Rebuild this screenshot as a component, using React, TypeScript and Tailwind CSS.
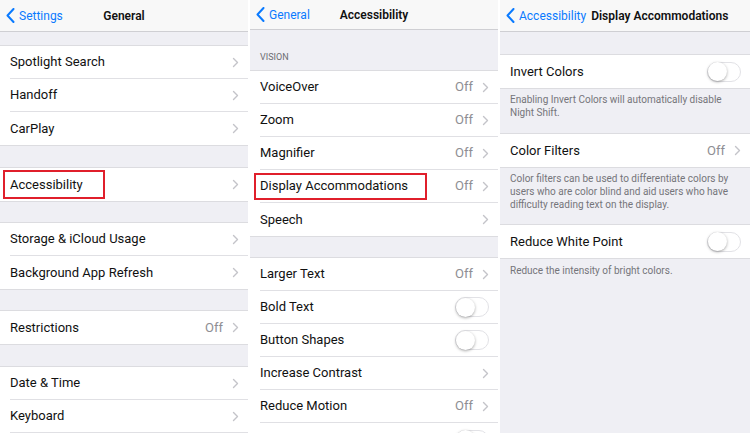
import React from "react";

type RowProps = {
  label: string;
  detail?: string;
  chevron?: boolean;
  toggle?: boolean;
  last?: boolean;
  box?: string;
};

function Chevron() {
  return (
    <svg width="7" height="11" viewBox="0 0 7 11" className="shrink-0">
      <path d="M1.5 1.5L5.5 5.5L1.5 9.5" fill="none" stroke="#c4c4c9" strokeWidth="1.4" strokeLinecap="round" strokeLinejoin="round" />
    </svg>
  );
}

function BackChevron() {
  return (
    <svg width="9" height="15" viewBox="0 0 9 15" className="shrink-0">
      <path d="M7.5 1L1.5 7.5L7.5 14" fill="none" stroke="#0a7aff" strokeWidth="2" strokeLinecap="round" strokeLinejoin="round" />
    </svg>
  );
}

function Toggle() {
  return (
    <div className="w-[34px] h-[20px] rounded-full border border-[#e2e2e6] bg-white flex items-center shrink-0">
      <div className="w-[19px] h-[19px] rounded-full bg-white shadow-[0_1px_3px_rgba(0,0,0,0.35)]" />
    </div>
  );
}

function Row({ label, detail, chevron = true, toggle, last, box }: RowProps) {
  return (
    <div className="bg-white pl-[10px]">
      <div className={`h-[33px] flex items-center pr-[9px] ${last ? "" : "border-b border-[#e0e0e4]"}`}>
        {box ? (
          <span className={`flex items-center border-2 border-[#e01f2b] ${box}`}>{label}</span>
        ) : (
          <span>{label}</span>
        )}
        <div className="ml-auto flex items-center gap-[9px]">
          {detail && <span className="text-[#8e8e93]">{detail}</span>}
          {toggle ? <Toggle /> : chevron && <Chevron />}
        </div>
      </div>
    </div>
  );
}

function Group({ children }: { children: React.ReactNode }) {
  return <div className="border-y border-[#dcdce0]">{children}</div>;
}

function Footer({ children, className }: { children: React.ReactNode; className: string }) {
  return <div className={`px-[10px] text-[10px] leading-[13px] text-[#75757a] ${className}`}>{children}</div>;
}

export default function App() {
  return (
    <div className="w-[750px] h-[433px] overflow-hidden bg-white grid grid-cols-[248px_248px_1fr] gap-x-[2px] text-[13px] text-[#111] font-['Roboto',sans-serif]">
      {/* General */}
      <div className="bg-[#efeff4] h-[433px] overflow-hidden">
        <div className="h-[32px] bg-[#f8f8f8] border-b border-[#cfcfd3] grid grid-cols-[1fr_auto_1fr] items-center text-[12px]">
          <div className="flex items-center gap-[4px] pl-[6px] text-[#0a7aff]">
            <BackChevron />
            <span>Settings</span>
          </div>
          <div className="font-semibold text-[#111]">General</div>
          <div />
        </div>
        <div className="h-[13px]" />
        <Group>
          <Row label="Spotlight Search" />
          <Row label="Handoff" />
          <Row label="CarPlay" last />
        </Group>
        <div className="h-[21px]" />
        <Group>
          <Row label="Accessibility" last box="-ml-[7px] pl-[5px] w-[102px] h-[29px]" />
        </Group>
        <div className="h-[20px]" />
        <Group>
          <Row label="Storage & iCloud Usage" />
          <Row label="Background App Refresh" last />
        </Group>
        <div className="h-[20px]" />
        <Group>
          <Row label="Restrictions" detail="Off" last />
        </Group>
        <div className="h-[21px]" />
        <Group>
          <Row label="Date & Time" />
          <Row label="Keyboard" />
        </Group>
      </div>

      {/* Accessibility */}
      <div className="bg-[#efeff4] h-[433px] overflow-hidden">
        <div className="h-[30px] bg-[#f8f8f8] border-b border-[#cfcfd3] grid grid-cols-[1fr_auto_1fr] items-center text-[12px]">
          <div className="flex items-center gap-[4px] pl-[6px] text-[#0a7aff]">
            <BackChevron />
            <span>General</span>
          </div>
          <div className="font-semibold text-[#111]">Accessibility</div>
          <div />
        </div>
        <div className="h-[40px] flex items-end pb-[6px] pl-[10px] text-[9px] text-[#6d6d72]">VISION</div>
        <Group>
          <Row label="VoiceOver" detail="Off" />
          <Row label="Zoom" detail="Off" />
          <Row label="Magnifier" detail="Off" />
          <Row label="Display Accommodations" detail="Off" box="-ml-[6px] pl-[4px] w-[173px] h-[27px]" />
          <Row label="Speech" last />
        </Group>
        <div className="h-[20px]" />
        <Group>
          <Row label="Larger Text" detail="Off" />
          <Row label="Bold Text" toggle />
          <Row label="Button Shapes" toggle />
          <Row label="Increase Contrast" />
          <Row label="Reduce Motion" detail="Off" />
          <Row label="" toggle last />
        </Group>
      </div>

      {/* Display Accommodations */}
      <div className="bg-[#efeff4] h-[433px] overflow-hidden">
        <div className="h-[32px] bg-[#f8f8f8] border-b border-[#cfcfd3] flex items-center text-[12px] pl-[6px]">
          <div className="flex items-center gap-[4px] text-[#0a7aff]">
            <BackChevron />
            <span>Accessibility</span>
          </div>
          <div className="ml-[5px] font-semibold text-[#111]">Display Accommodations</div>
        </div>
        <div className="h-[22px]" />
        <Group>
          <Row label="Invert Colors" toggle last />
        </Group>
        <Footer className="h-[44px] pt-[4px]">
          Enabling Invert Colors will automatically disable Night Shift.
        </Footer>
        <Group>
          <Row label="Color Filters" detail="Off" last />
        </Group>
        <Footer className="h-[56px] pt-[4px]">
          Color filters can be used to differentiate colors by users who are color blind and aid users who have difficulty reading text on the display.
        </Footer>
        <Group>
          <Row label="Reduce White Point" toggle last />
        </Group>
        <Footer className="pt-[5px]">Reduce the intensity of bright colors.</Footer>
      </div>
    </div>
  );
}
